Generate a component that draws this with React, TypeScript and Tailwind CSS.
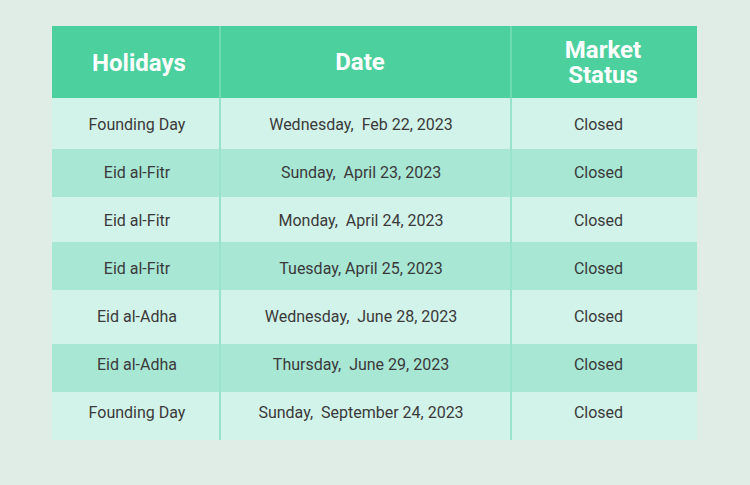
import React from 'react';

interface Holiday {
    name: string;
    date: string;
    status: string;
    rowClass: string;
}

// row heights and text offsets follow the screenshot (bands are not perfectly even)
const holidays: Holiday[] = [
    { name: 'Founding Day', date: 'Wednesday,  Feb 22, 2023', status: 'Closed', rowClass: 'h-[51px] pt-[2px]' },
    { name: 'Eid al-Fitr', date: 'Sunday,  April 23, 2023', status: 'Closed', rowClass: 'h-[48px] pb-[1px]' },
    { name: 'Eid al-Fitr', date: 'Monday,  April 24, 2023', status: 'Closed', rowClass: 'h-[45px] pt-[2px]' },
    { name: 'Eid al-Fitr', date: 'Tuesday, April 25, 2023', status: 'Closed', rowClass: 'h-[48px] pt-[5px]' },
    { name: 'Eid al-Adha', date: 'Wednesday,  June 28, 2023', status: 'Closed', rowClass: 'h-[54px] pb-[1px]' },
    { name: 'Eid al-Adha', date: 'Thursday,  June 29, 2023', status: 'Closed', rowClass: 'h-[48px] pb-[7px]' },
    { name: 'Founding Day', date: 'Sunday,  September 24, 2023', status: 'Closed', rowClass: 'h-[48px] pb-[7px]' },
];

const HeaderCell: React.FC<{ className?: string; children: React.ReactNode }> = ({ className, children }) => (
    <div className={`flex items-center justify-center text-center text-[24px] font-bold leading-[25px] text-white ${className ?? ''}`}>
        {children}
    </div>
);

export default function App() {
    return (
        <div className="min-h-[485px] w-[750px] bg-[#e0ede6] pt-[26px] pl-[52px] font-['Roboto',sans-serif]">
            <div className="w-[645px]">
                <div className="flex h-[72px] bg-[#4bd09e]">
                    <HeaderCell className="w-[167px] pl-[7px] pt-[2px]">Holidays</HeaderCell>
                    <div className="w-[2px] bg-[#6fdab2]" />
                    <HeaderCell className="w-[289px] pr-[11px]">Date</HeaderCell>
                    <div className="w-[2px] bg-[#6fdab2]" />
                    <HeaderCell className="flex-1 pr-[3px] pt-[1px]">
                        Market
                        <br />
                        Status
                    </HeaderCell>
                </div>
                {holidays.map((h, i) => (
                    <div
                        key={i}
                        className={`flex text-[16px] text-[#3a3a3a] ${i % 2 === 0 ? 'bg-[#d2f3e9]' : 'bg-[#a9e7d5]'}`}
                    >
                        <div className={`flex w-[167px] items-center justify-center pl-[3px] ${h.rowClass}`}>{h.name}</div>
                        <div className="w-[2px] bg-[#99e2cb]" />
                        <div className={`flex w-[289px] items-center justify-center whitespace-pre pr-[9px] ${h.rowClass}`}>
                            {h.date}
                        </div>
                        <div className="w-[2px] bg-[#99e2cb]" />
                        <div className={`flex flex-1 items-center justify-center pr-[12px] ${h.rowClass}`}>{h.status}</div>
                    </div>
                ))}
            </div>
        </div>
    );
}
